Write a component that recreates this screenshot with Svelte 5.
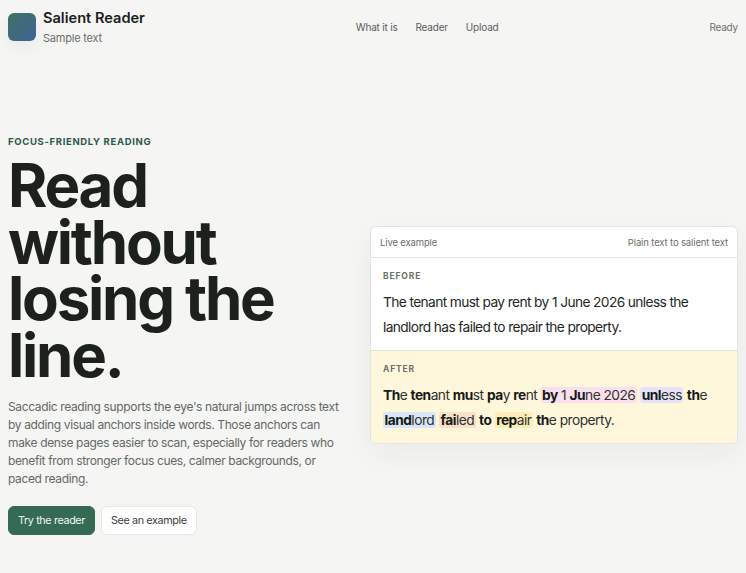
<script>
	const navLinks = ['What it is', 'Reader', 'Upload'];
</script>

<div class="page">
	<header class="topbar">
		<div class="brand">
			<div class="logo"></div>
			<div class="brand-text">
				<div class="name">Salient Reader</div>
				<div class="tag">Sample text</div>
			</div>
		</div>
		<nav class="nav">
			{#each navLinks as link}
				<span>{link}</span>
			{/each}
		</nav>
		<div class="status">Ready</div>
	</header>

	<main class="hero">
		<section class="intro">
			<div class="eyebrow">FOCUS-FRIENDLY READING</div>
			<h1>Read without losing the line.</h1>
			<p class="lead">
				Saccadic reading supports the eye's natural jumps across text by adding visual anchors inside words. Those anchors can make dense pages easier to scan, especially for readers who benefit from stronger focus cues, calmer backgrounds, or paced reading.
			</p>
			<div class="actions">
				<button class="primary" type="button">Try the reader</button>
				<button class="secondary" type="button">See an example</button>
			</div>
		</section>

		<section class="card">
			<div class="card-head">
				<span>Live example</span>
				<span>Plain text to salient text</span>
			</div>
			<div class="block">
				<div class="label">BEFORE</div>
				<p class="sample">The tenant must pay rent by 1 June 2026 unless the landlord has failed to repair the property.</p>
			</div>
			<div class="block after">
				<div class="label">AFTER</div>
				<p class="sample salient">
					<b>Th</b>e <b>ten</b>ant <b>mu</b>st <b>pa</b>y <b>re</b>nt <span class="hl pink"><b>by</b> 1 <b>Ju</b>ne 2026</span> <span class="hl violet"><b>unl</b>ess</span> <b>th</b>e <span class="hl blue"><b>land</b>lord</span> <span class="hl peach"><b>fai</b>led</span> <b>to</b> <span class="hl yellow"><b>rep</b>air</span> <b>th</b>e property.
				</p>
			</div>
		</section>
	</main>
</div>

<style>
	:global(body) {
		background: #f5f5f3;
		font-family: Inter, "Liberation Sans", sans-serif;
		color: #1c211e;
	}
	.page {
		height: 573px;
		overflow: hidden;
		box-sizing: border-box;
		padding: 0 8px;
	}
	.topbar {
		display: flex;
		justify-content: space-between;
		align-items: center;
		padding-top: 9px;
	}
	.brand {
		display: flex;
		gap: 7px;
		align-items: center;
	}
	.logo {
		width: 28px;
		height: 28px;
		border-radius: 6px;
		background: linear-gradient(135deg, #3f7163, #3f6496);
		box-shadow: 0 6px 14px rgba(30, 50, 45, 0.05);
	}
	.name {
		font-size: 14.6px;
		font-weight: 600;
		line-height: 19px;
	}
	.tag {
		font-size: 11px;
		letter-spacing: -0.02em;
		line-height: 14px;
		margin-top: 3px;
		color: #69706c;
	}
	.nav {
		display: flex;
		gap: 18px;
		font-size: 10px;
		letter-spacing: -0.02em;
		color: #59605c;
	}
	.status {
		font-size: 10px;
		letter-spacing: -0.02em;
		color: #69706c;
	}
	.hero {
		display: grid;
		grid-template-columns: 338px 1fr;
		gap: 24px;
		align-items: center;
		padding-top: 90px;
	}
	.eyebrow {
		font-size: 9.5px;
		font-weight: 700;
		letter-spacing: 0.07em;
		color: #2f5a4a;
		line-height: 14px;
	}
	h1 {
		margin: 8px 0 0;
		font-size: 60px;
		line-height: 56.5px;
		font-weight: 700;
		letter-spacing: -2.2px;
	}
	.lead {
		margin: 15px 0 0;
		font-size: 12px;
		letter-spacing: -0.03em;
		line-height: 18px;
		color: #636a66;
	}
	.actions {
		display: flex;
		gap: 6px;
		margin-top: 18px;
	}
	button {
		font: inherit;
		font-size: 10.8px;
		letter-spacing: -0.035em;
		height: 29px;
		border-radius: 6px;
		padding: 0 9px;
	}
	.primary {
		background: #356b55;
		color: #f2f6f3;
		border: 1px solid #356b55;
	}
	.secondary {
		background: #fff;
		color: #3b413e;
		border: 1px solid #e7e7e4;
	}
	.card {
		background: #fff;
		border: 1px solid #e4e5e2;
		border-radius: 6px;
		overflow: hidden;
		box-shadow: 0 10px 30px rgba(30, 50, 45, 0.05);
	}
	.card-head {
		display: flex;
		justify-content: space-between;
		align-items: center;
		height: 30px;
		padding: 0 9px;
		font-size: 9.5px;
		letter-spacing: -0.015em;
		color: #69706c;
		border-bottom: 1px solid #e4e5e2;
	}
	.block {
		padding: 12px 12px 0;
		height: 80px;
	}
	.after {
		background: #fff7dc;
		border-top: 1px solid #e4e5e2;
	}
	.label {
		font-size: 8.5px;
		font-weight: 700;
		letter-spacing: 0.1em;
		line-height: 12px;
		color: #6d716d;
	}
	.sample {
		margin: 8px 0 0;
		font-size: 13.75px;
		letter-spacing: -0.045em;
		line-height: 24.5px;
		color: #232825;
	}
	.sample.salient {
		letter-spacing: -0.038em;
		color: #2e3330;
	}
	.sample b {
		font-weight: 700;
		color: #161a18;
	}
	.hl {
		border-radius: 3px;
		padding: 0 1.5px;
	}
	.pink { background: #f9e0ec; }
	.violet { background: #e7e2f8; }
	.blue { background: #d9e6f5; }
	.peach { background: #f8e0cb; }
	.yellow { background: #fdeeb8; }
</style>
